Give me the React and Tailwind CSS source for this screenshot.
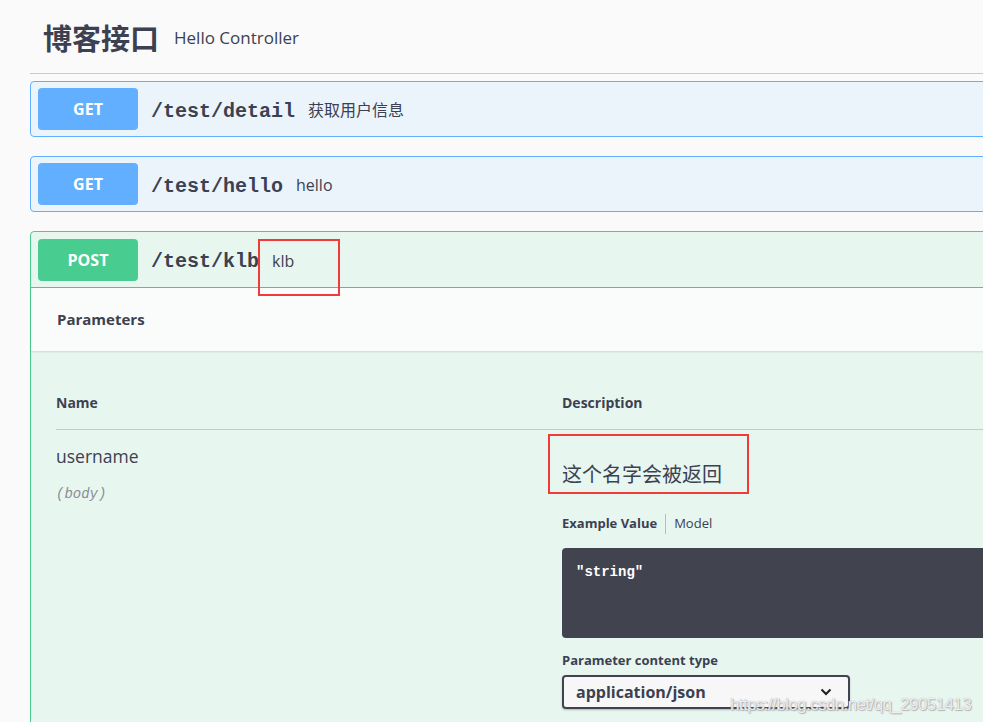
import React from 'react';

const sans = "font-['Open_Sans','Noto_Sans_CJK_SC',sans-serif]";
const mono = "font-['Liberation_Mono','DejaVu_Sans_Mono',monospace]";

const Summary = ({ method, path, desc, badge, height = 'h-[54px]' }) => {
    return (
        <div className={`flex items-center pl-[7px] ${height}`}>
            <div className={`w-[100px] h-[42px] rounded-[4px] flex items-center justify-center text-white font-bold text-[16px] ${badge}`}>
                {method}
            </div>
            <span className={`ml-[13px] mt-[5px] ${mono} font-bold text-[20px] text-[#3b4151]`}>{path}</span>
            <span className="ml-[13px] mt-[2px] text-[16px] text-[#3b4151]">{desc}</span>
        </div>
    );
};

const App = () => {
    return (
        <div className={`w-[983px] h-[722px] overflow-hidden bg-[#fafafa] relative ${sans}`}>
            <div className="w-[1100px] pl-[30px]">
                <div className="flex items-center h-[74px] pl-[13px] pt-[2px] border-b border-[#c9cacc]">
                    <h1 className="text-[29px] font-bold text-[#3b4151] font-['Noto_Sans_CJK_SC',sans-serif] leading-none">博客接口</h1>
                    <span className="ml-[15px] text-[17px] text-[#3b4151]">Hello Controller</span>
                </div>

                <div className="mt-[7px] border border-[#61affe] bg-[#ebf3fb] rounded-[4px]">
                    <Summary method="GET" path="/test/detail" desc="获取用户信息" badge="bg-[#61affe]" />
                </div>

                <div className="mt-[19px] border border-[#61affe] bg-[#ebf3fb] rounded-[4px]">
                    <Summary method="GET" path="/test/hello" desc="hello" badge="bg-[#61affe]" />
                </div>

                <div className="mt-[19px] border border-[#49cc90] bg-[#e8f6f0] rounded-[4px] h-[600px]">
                    <div className="border-b border-[#49cc90]">
                        <Summary method="POST" path="/test/klb" desc="klb" badge="bg-[#49cc90]" height="h-[55px]" />
                    </div>
                    <div className="h-[63px] flex items-center pl-[26px] bg-[#fafcfb] shadow-[0_1px_2px_rgba(0,0,0,0.12)]">
                        <h4 className="text-[15px] font-bold text-[#3b4151]">Parameters</h4>
                    </div>
                    <div className="pl-[25px] pt-[41px]">
                        <div className="flex border-b border-[#c5cbc9] h-[38px] items-start">
                            <div className="w-[506px] text-[14px] font-bold text-[#3b4151]">Name</div>
                            <div className="text-[14px] font-bold text-[#3b4151]">Description</div>
                        </div>
                        <div className="flex pt-[13px]">
                            <div className="w-[506px]">
                                <div className="text-[17.5px] text-[#3b4151] leading-[26px]">username</div>
                                <div className={`mt-[15px] ${mono} italic text-[14px] text-[#8a8d95]`}>(body)</div>
                            </div>
                            <div className="flex-1">
                                <div className="mt-[18px] text-[20px] text-[#3b4151] font-['Noto_Sans_CJK_SC',sans-serif] leading-[26px]">这个名字会被返回</div>
                                <div className="flex items-center mt-[25px] h-[24px] text-[13px]">
                                    <span className="font-bold text-[#3b4151] pr-[8px]">Example Value</span>
                                    <span className="border-l border-[#b8bcc0] pl-[8px] text-[#3b4151]">Model</span>
                                </div>
                                <div className="mt-[12px] h-[90px] bg-[#41444e] rounded-[4px] px-[14px] pt-[10px]">
                                    <span className={`${mono} font-bold text-[14px] text-white`}>"string"</span>
                                </div>
                                <div className="mt-[13px] text-[13px] font-bold text-[#3b4151]">Parameter content type</div>
                                <div className="mt-[4px] w-[288px] h-[34px] border-2 border-[#41444e] rounded-[4px] bg-[#f7f7f7] shadow-[0_1px_2px_rgba(0,0,0,0.25)] flex items-center justify-between pl-[12px] pr-[16px]">
                                    <span className="text-[16px] font-bold text-[#3b4151]">application/json</span>
                                    <svg width="12" height="8" viewBox="0 0 12 8" fill="none">
                                        <path d="M1.5 1.5 L6 6 L10.5 1.5" stroke="#1f1f1f" strokeWidth="2" />
                                    </svg>
                                </div>
                            </div>
                        </div>
                    </div>
                </div>
            </div>

            <div className="absolute left-[258px] top-[239px] w-[82px] h-[57px] border-2 border-[#f23a3a]" />
            <div className="absolute left-[548px] top-[434px] w-[201px] h-[60px] border-2 border-[#f23a3a]" />

            <div className="absolute left-[730px] top-[692px] text-[17px] tracking-[-0.6px] whitespace-nowrap text-white/80 font-['Liberation_Sans',sans-serif] [text-shadow:0_0_1px_#9a9a9a,1px_1px_1px_#b5b5b5]">
                https://blog.csdn.net/qq_29051413
            </div>
        </div>
    );
};

export default App;
